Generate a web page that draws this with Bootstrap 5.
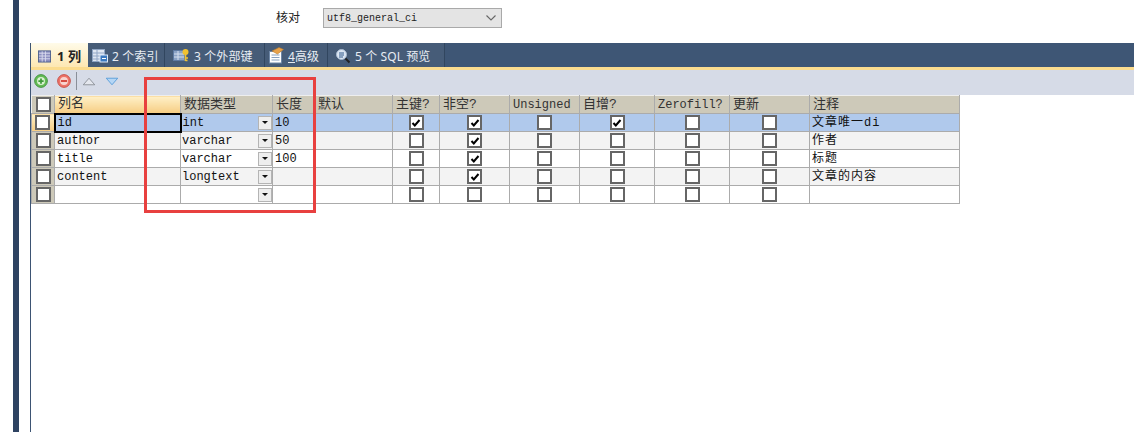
<!DOCTYPE html>
<html lang="zh"><head><meta charset="utf-8"><title>表结构</title>
<link href="https://cdn.jsdelivr.net/npm/bootstrap@5.3.0/dist/css/bootstrap.min.css" rel="stylesheet">
<style>
html,body{height:432px;overflow:hidden;background:#fff;margin:0}
body{font-family:"Liberation Mono","Noto Sans CJK SC",monospace;font-size:12px;color:#111}
.shell{height:432px;padding-left:13px}
.rail{width:6px;background:#2e4362;flex:none}
.work{margin-left:11px;min-width:0}
.collation{height:43px;padding:8px 0 0 246px}
.collation label{width:47px;font:12px/18px "Noto Sans CJK SC",sans-serif;color:#222}
.collation select{width:179px;height:20px;padding:0 0 0 3px;font:10px "Liberation Mono",monospace;color:#222;background-color:#e4e4e4;border:1px solid #a9a9a9;border-radius:0;background-image:url("data:image/svg+xml,%3Csvg xmlns='http://www.w3.org/2000/svg' viewBox='0 0 12 8'%3E%3Cpath d='M1.500 1.500L6 6l4.500-4.500' fill='none' stroke='%23666' stroke-width='1.100'/%3E%3C/svg%3E");background-position:right 4px center;background-size:12px 8px}
.panel{border-left:1px solid #3d5473;position:relative;height:389px}
.tabbar{height:24px;background:#3e5675;color:#e8edf3;font:12px "Noto Sans",'Noto Sans CJK SC',sans-serif}
.tabitem{height:24px;padding-top:1px;gap:4px;border-right:1px solid #31465f;background:#465c78;white-space:nowrap;letter-spacing:.1px}
.tabitem svg{flex:none}
.tabitem.sel{background:linear-gradient(#fffbe9,#fde7b2);color:#222;font:700 13px "Noto Sans",'Noto Sans CJK SC',sans-serif;border:0;width:57px;padding-left:7px;gap:6px}
.tab2{width:77px;padding-left:4px}.tab3{width:100px;padding-left:8px}.tab4{width:63px;padding-left:3px;gap:3px}.tab5{width:117px;padding-left:7px}
.tabrule{height:3px;background:#fbdc8f}
.tools{height:25px;background:#d6dbe7;padding:0 0 3px 3px}
.tools svg{flex:none}
.gap9{margin-left:9px}.gap5{margin-left:5px}
.tooldiv{width:1px;height:18px;background:#8a8f99}
table.fields{table-layout:fixed;width:928px;margin:0;border-collapse:collapse;--bs-table-bg:transparent;color:#111}
table.fields th,table.fields td{height:18px;padding:0 2px;border:1px solid #ababab;font-weight:400;line-height:16px;overflow:hidden;white-space:nowrap;vertical-align:middle;box-shadow:none}
table.fields thead th{background:#cdc9b9;border-color:#eee #ababab #ababab #eee;font:13px/16px "Liberation Mono","Noto Sans CJK SC",monospace;color:#333;padding-left:3px}
table.fields thead th.mono{font-size:12px}
table.fields thead th.hot{background:linear-gradient(#fff0c8,#f6cd82)}
table.fields tbody th{background:#cdc9b9;padding:0;text-align:center}
table.fields tbody th.hot{background:linear-gradient(#fff0c8,#f6cd82)}
.alt td{background:#f3f3f3}
.cur td{background:#b0c9ec}
table.fields tbody td.zh{font:12px/16px "Liberation Mono","Noto Sans CJK SC",monospace;letter-spacing:1px}
table.fields .cur td.edit{border:2px solid #000}
.boxmark{appearance:none;display:block;margin:auto;width:15px;height:15px;border:2px solid #666;background:#fff;border-radius:0}
.boxmark:checked{background:#fff url("data:image/svg+xml,%3Csvg xmlns='http://www.w3.org/2000/svg' viewBox='0 0 10 10'%3E%3Cpath d='M1.500 5l2.300 2.500L8.500 2' fill='none' stroke='%23000' stroke-width='2'/%3E%3C/svg%3E") center/10px 10px no-repeat}
table.fields td.typecell{padding:0 0 0 1px}
.dropbtn{width:14px;height:14px;background:#eee;border:1px solid #b4b4b4;flex:none}
.dropbtn::after{content:"";border:3px solid transparent;border-top:3px solid #111;border-bottom:0}
.marker{position:absolute;left:113px;top:34px;width:172px;height:136px;border:3px solid #e8403f;pointer-events:none}
.c0{width:23px}.c1{width:126px}.c2{width:92px}.c3{width:42px}.c4{width:78px}.c5{width:47px}.c6{width:70px}.c7{width:70px}.c8{width:75px}.c9{width:75px}.c10{width:80px}.c11{width:150px}
</style></head>
<body>
<div class="shell d-flex">
  <div class="rail"></div>
  <div class="work flex-grow-1">
    <div class="collation d-flex align-items-start">
      <label for="coll">核对</label>
      <select id="coll" class="form-select"><option>utf8_general_ci</option></select>
    </div>
    <div class="panel">
      <div class="tabbar d-flex">
        <div class="tabitem sel d-flex align-items-center">
          <svg width="13" height="14" viewBox="0 0 14 14"><rect x=".5" y="1.500" width="13" height="12" fill="#8d8fc0" stroke="#4b5f8c"/><path d="M1 4h12M1 7h12M1 10h12M4.500 2v11M8 2v11" stroke="#d9dbee"/></svg><span>1 列</span>
        </div>
        <div class="tabitem tab2 d-flex align-items-center">
          <svg width="16" height="15" viewBox="0 0 16 15"><rect x=".5" y="1.500" width="12" height="12" fill="#dfe7f2" stroke="#8fa5c4"/><path d="M1 5h11M1 8h11M1 11h11M5 2v11" stroke="#92a7c6"/><rect x="8" y="7" width="7.500" height="7" fill="#3a79c0" stroke="#dbe8f7"/><path d="M10 10.500h4" stroke="#fff"/></svg><span>2 个索引</span>
        </div>
        <div class="tabitem tab3 d-flex align-items-center">
          <svg width="17" height="15" viewBox="0 0 17 15"><rect x=".5" y="2.500" width="11" height="10" fill="#8aa2c5" stroke="#5f7ba3"/><path d="M1 6h10M1 9h10M5 3v9" stroke="#d5dfee"/><circle cx="12.500" cy="4" r="3" fill="#f2c230"/><path d="M12.500 6v7M12.500 10h2.500M12.500 12.500h2" stroke="#f2c230" stroke-width="1.600"/></svg><span>3 个外部键</span>
        </div>
        <div class="tabitem tab4 d-flex align-items-center">
          <svg width="17" height="17" viewBox="0 0 17 17"><rect x="1.500" y="4.500" width="12" height="11.500" fill="#fff" stroke="#6d86a6"/><path d="M3.500 8h8M3.500 10.500h8M3.500 13h8" stroke="#88a0bf"/><path d="M4 4l7-3.500 4.500 2-6 4.500z" fill="#e8a24b" stroke="#b97a2c" stroke-width=".6"/></svg><span><u>4</u>高级</span>
        </div>
        <div class="tabitem tab5 d-flex align-items-center">
          <svg width="16" height="16" viewBox="0 0 16 16"><circle cx="6.500" cy="6.500" r="5" fill="#dbe6f3" stroke="#a9bbd1"/><path d="M4 5h5M4 7h5M4 9h4" stroke="#31588a"/><path d="M10.500 10.500l4 4" stroke="#222" stroke-width="2"/></svg><span>5 个 SQL 预览</span>
        </div>
      </div>
      <div class="tabrule"></div>
      <div class="tools d-flex align-items-center">
        <svg width="14" height="14" viewBox="0 0 16 16"><circle cx="8" cy="8" r="7.300" fill="#63bb55" stroke="#3f8f3a"/><circle cx="8" cy="8" r="4.500" fill="#d9f0d0"/><path d="M5 8h6M8 5v6" stroke="#3f9a3a" stroke-width="2"/></svg>
        <svg class="gap9" width="14" height="14" viewBox="0 0 16 16"><circle cx="8" cy="8" r="7.300" fill="#ee7468" stroke="#c34a42"/><circle cx="8" cy="8" r="4.500" fill="#f8d4cf"/><path d="M4.500 8h7" stroke="#d5473e" stroke-width="2.200"/></svg>
        <span class="tooldiv gap5"></span>
        <svg class="gap5" width="14" height="9" viewBox="0 0 16 11"><path d="M1 9.500h14L8 1.500z" fill="#e4e7ee" stroke="#80848c"/></svg>
        <svg class="gap9" width="14" height="9" viewBox="0 0 16 11"><path d="M1 1.500h14L8 9.500z" fill="#b5d6f5" stroke="#4c95d6"/></svg>
      </div>
      <table class="table fields mb-0">
        <colgroup><col class="c0"><col class="c1"><col class="c2"><col class="c3"><col class="c4"><col class="c5"><col class="c6"><col class="c7"><col class="c8"><col class="c9"><col class="c10"><col class="c11"></colgroup>
        <thead><tr>
          <th class="p-0"><input type="checkbox" class="boxmark" aria-label="全选"></th>
          <th class="hot">列名</th><th>数据类型</th><th>长度</th><th>默认</th><th>主键?</th><th>非空?</th><th class="mono">Unsigned</th><th>自增?</th><th class="mono">Zerofill?</th><th>更新</th><th>注释</th>
        </tr></thead>
        <tbody>
          <tr class="cur">
            <th class="hot"><input type="checkbox" class="boxmark" aria-label="选择"></th>
            <td class="edit">id</td>
            <td class="typecell"><div class="d-flex align-items-center justify-content-between">int<span class="dropbtn d-flex align-items-center justify-content-center"></span></div></td>
            <td>10</td><td></td>
            <td><input type="checkbox" class="boxmark" checked aria-label="主键"></td>
            <td><input type="checkbox" class="boxmark" checked aria-label="非空"></td>
            <td><input type="checkbox" class="boxmark" aria-label="Unsigned"></td>
            <td><input type="checkbox" class="boxmark" checked aria-label="自增"></td>
            <td><input type="checkbox" class="boxmark" aria-label="Zerofill"></td>
            <td><input type="checkbox" class="boxmark" aria-label="更新"></td>
            <td class="zh">文章唯一di</td>
          </tr>
          <tr class="alt">
            <th><input type="checkbox" class="boxmark" aria-label="选择"></th>
            <td>author</td>
            <td class="typecell"><div class="d-flex align-items-center justify-content-between">varchar<span class="dropbtn d-flex align-items-center justify-content-center"></span></div></td>
            <td>50</td><td></td>
            <td><input type="checkbox" class="boxmark" aria-label="主键"></td>
            <td><input type="checkbox" class="boxmark" checked aria-label="非空"></td>
            <td><input type="checkbox" class="boxmark" aria-label="Unsigned"></td>
            <td><input type="checkbox" class="boxmark" aria-label="自增"></td>
            <td><input type="checkbox" class="boxmark" aria-label="Zerofill"></td>
            <td><input type="checkbox" class="boxmark" aria-label="更新"></td>
            <td class="zh">作者</td>
          </tr>
          <tr>
            <th><input type="checkbox" class="boxmark" aria-label="选择"></th>
            <td>title</td>
            <td class="typecell"><div class="d-flex align-items-center justify-content-between">varchar<span class="dropbtn d-flex align-items-center justify-content-center"></span></div></td>
            <td>100</td><td></td>
            <td><input type="checkbox" class="boxmark" aria-label="主键"></td>
            <td><input type="checkbox" class="boxmark" checked aria-label="非空"></td>
            <td><input type="checkbox" class="boxmark" aria-label="Unsigned"></td>
            <td><input type="checkbox" class="boxmark" aria-label="自增"></td>
            <td><input type="checkbox" class="boxmark" aria-label="Zerofill"></td>
            <td><input type="checkbox" class="boxmark" aria-label="更新"></td>
            <td class="zh">标题</td>
          </tr>
          <tr class="alt">
            <th><input type="checkbox" class="boxmark" aria-label="选择"></th>
            <td>content</td>
            <td class="typecell"><div class="d-flex align-items-center justify-content-between">longtext<span class="dropbtn d-flex align-items-center justify-content-center"></span></div></td>
            <td></td><td></td>
            <td><input type="checkbox" class="boxmark" aria-label="主键"></td>
            <td><input type="checkbox" class="boxmark" checked aria-label="非空"></td>
            <td><input type="checkbox" class="boxmark" aria-label="Unsigned"></td>
            <td><input type="checkbox" class="boxmark" aria-label="自增"></td>
            <td><input type="checkbox" class="boxmark" aria-label="Zerofill"></td>
            <td><input type="checkbox" class="boxmark" aria-label="更新"></td>
            <td class="zh">文章的内容</td>
          </tr>
          <tr>
            <th><input type="checkbox" class="boxmark" aria-label="选择"></th>
            <td></td>
            <td class="typecell"><div class="d-flex align-items-center justify-content-end"><span class="dropbtn d-flex align-items-center justify-content-center"></span></div></td>
            <td></td><td></td>
            <td><input type="checkbox" class="boxmark" aria-label="主键"></td>
            <td><input type="checkbox" class="boxmark" aria-label="非空"></td>
            <td><input type="checkbox" class="boxmark" aria-label="Unsigned"></td>
            <td><input type="checkbox" class="boxmark" aria-label="自增"></td>
            <td><input type="checkbox" class="boxmark" aria-label="Zerofill"></td>
            <td><input type="checkbox" class="boxmark" aria-label="更新"></td>
            <td></td>
          </tr>
        </tbody>
      </table>
      <div class="marker"></div>
    </div>
  </div>
</div>
<script src="https://cdn.jsdelivr.net/npm/bootstrap@5.3.0/dist/js/bootstrap.bundle.min.js"></script>
</body></html>
